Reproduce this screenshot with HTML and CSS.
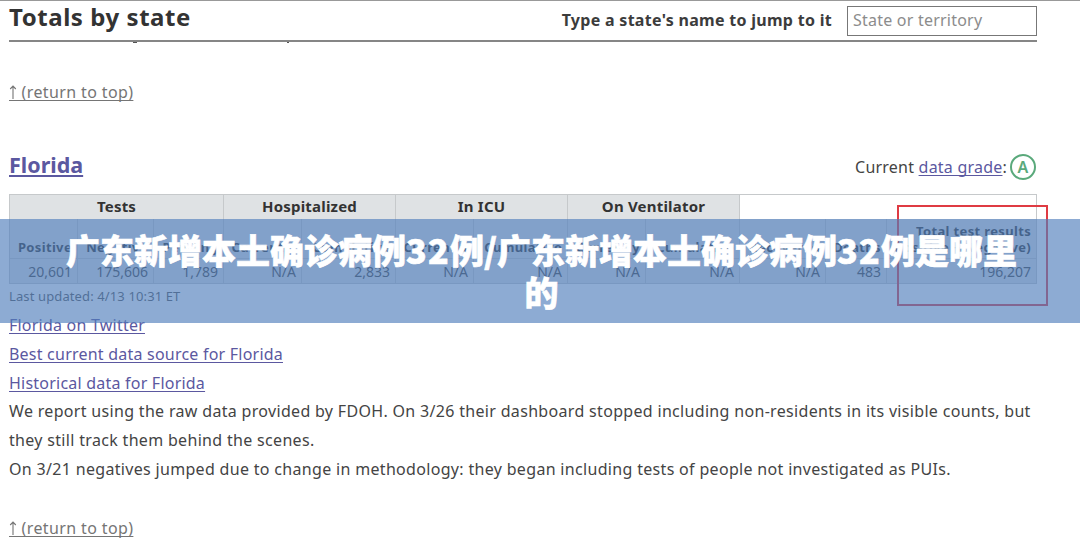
FILE: index.html
```html
<!DOCTYPE html>
<html lang="en">
<head>
    <meta charset="UTF-8">
    <meta name="viewport" content="width=device-width, initial-scale=1.0">
    <title>Totals by state</title>
    <link rel="stylesheet" href="styles.css">
</head>
<body>
    <div class="main">
        <header class="header">
            <h2>Totals by state</h2>
            <label for="state">Type a state's name to jump to it</label>
            <input type="text" id="state" placeholder="State or territory">
        </header>
        <div class="scrolled"><i></i><i></i></div>
        <a class="return" href="#"><svg class="arrow" viewBox="0 0 8 16"><path d="M4 14V1M1.2 4L4 1L6.8 4M0 15.5H8"/></svg> (return to top)</a>
        <div class="state_title">
            <h3><a href="#">Florida</a></h3>
            <p>Current <a href="#">data grade</a>:</p>
            <span class="grade">A</span>
        </div>
        <div class="table_wrap">
            <table>
                <colgroup>
                    <col class="w68"><col class="w76"><col class="w70">
                    <col class="w78"><col class="w94">
                    <col class="w78"><col class="w94">
                    <col class="w78"><col class="w94">
                    <col class="w86"><col class="w61"><col class="w150">
                </colgroup>
                <tr class="groups">
                    <th colspan="3">Tests</th>
                    <th colspan="2">Hospitalized</th>
                    <th colspan="2">In ICU</th>
                    <th colspan="2">On Ventilator</th>
                    <th colspan="3" class="empty"></th>
                </tr>
                <tr class="names">
                    <th>Positive</th>
                    <th>Negative</th>
                    <th>Pending</th>
                    <th>Currently</th>
                    <th>Cumulative</th>
                    <th>Currently</th>
                    <th>Cumulative</th>
                    <th>Currently</th>
                    <th>Cumulative</th>
                    <th>Recovered</th>
                    <th>Deaths</th>
                    <th>Total test results<br>(Positive + Negative)</th>
                </tr>
                <tr class="values">
                    <td>20,601</td>
                    <td>175,606</td>
                    <td>1,789</td>
                    <td>N/A</td>
                    <td>2,833</td>
                    <td>N/A</td>
                    <td>N/A</td>
                    <td>N/A</td>
                    <td>N/A</td>
                    <td>N/A</td>
                    <td>483</td>
                    <td>196,207</td>
                </tr>
            </table>
            <div class="mark"></div>
        </div>
        <p class="updated">Last updated: 4/13 10:31 ET</p>
        <div class="notes">
            <p><a href="#">Florida on Twitter</a></p>
            <p><a href="#">Best current data source for Florida</a></p>
            <p><a href="#">Historical data for Florida</a></p>
            <p>We report using the raw data provided by FDOH. On 3/26 their dashboard stopped including non-residents in its visible counts, but<br>they still track them behind the scenes.</p>
            <p>On 3/21 negatives jumped due to change in methodology: they began including tests of people not investigated as PUIs.</p>
        </div>
        <a class="return return_last" href="#"><svg class="arrow" viewBox="0 0 8 16"><path d="M4 14V1M1.2 4L4 1L6.8 4M0 15.5H8"/></svg> (return to top)</a>
    </div>
    <div class="banner" lang="zh">广东新增本土确诊病例<span>32</span>例/广东新增本土确诊病例<span>32</span>例是哪里<br>的</div>
</body>
</html>
```

FILE: styles.css
```css
*{
    margin: 0;
    padding: 0;
    box-sizing: border-box;
}
body {
    height: 542px;
    overflow: hidden;
    position: relative;
    background-color: #fff;
    border-top: 1px solid #999;
    font-family: "Noto Sans", "Open Sans", sans-serif;
    font-size: 16px;
    color: #444;
}
a {
    color: #5b58a0;
    letter-spacing: 0.22px;
    text-underline-offset: 2px;
    text-decoration-thickness: 1px;
    text-decoration-skip-ink: none;
}
.main {
    width: 1028px;
    margin-left: 9px;
}
.header {
    display: flex;
    align-items: center;
    height: 41px;
    border-bottom: 2px solid #868686;
}
.header h2 {
    flex: 1;
    font-size: 24px;
    line-height: 32px;
    letter-spacing: 0.55px;
    padding-bottom: 7px;
    color: #333;
}
.header label {
    font-weight: 700;
    letter-spacing: 0.29px;
    color: #3c3c3c;
    margin-right: 15px;
    padding-bottom: 2px;
}
.header input {
    width: 190px;
    height: 30px;
    padding: 0 5px 1px;
    border: 1px solid #777;
    outline: none;
    font: inherit;
    letter-spacing: 0.22px;
}
.header input::placeholder {
    color: #8c8c8c;
}
/* bottoms of the line that has scrolled under the header */
.scrolled {
    display: flex;
    gap: 150px;
    height: 1px;
    padding-left: 124px;
}
.scrolled i {
    width: 4px;
    background-color: #555;
}
.scrolled i + i {
    width: 2px;
}
.return {
    display: block;
    width: 124px;
    margin-top: 35px;
    line-height: 28px;
    letter-spacing: 0.38px;
    color: #757575;
    white-space: nowrap;
}
.arrow {
    width: 8px;
    height: 16px;
    vertical-align: -3px;
    fill: none;
    stroke: #757575;
    stroke-width: 1.1;
}
.state_title {
    display: flex;
    align-items: center;
    height: 32px;
    margin-top: 44px;
}
.state_title p {
    letter-spacing: 0.22px;
    padding-top: 1px;
}
.state_title h3 {
    flex: 1;
    font-size: 21.5px;
    padding-bottom: 4px;
}
.state_title h3 a {
    letter-spacing: 0;
    text-decoration-thickness: 2px;
}
.grade {
    width: 26px;
    height: 26px;
    margin: 1px 1px 0 3px;
    border: 2.5px solid #5aa97b;
    border-radius: 50%;
    color: #5aa97b;
    font-size: 16px;
    font-weight: 600;
    line-height: 22px;
    text-align: center;
}
.table_wrap {
    position: relative;
    margin-top: 12px;
}
table {
    width: 1027px;
    table-layout: fixed;
    border-collapse: collapse;
}
.w61 { width: 61px; }
.w68 { width: 68px; }
.w70 { width: 70px; }
.w76 { width: 76px; }
.w78 { width: 78px; }
.w86 { width: 86px; }
.w94 { width: 94px; }
.w150 { width: 150px; }
th, td {
    border: 1px solid #c6c9cb;
    background-color: #dfe2e4;
    text-align: right;
    white-space: nowrap;
    padding: 0 5px 0 0;
}
.groups th {
    height: 24px;
    padding: 0 0 2px;
    font-size: 15px;
    line-height: 20px;
    letter-spacing: 0.2px;
    text-align: center;
    border-bottom: none;
    color: #333;
}
.groups .empty {
    background-color: #fff;
}
.names th {
    height: 40px;
    font-size: 13px;
    line-height: 16px;
    letter-spacing: 0.35px;
    vertical-align: bottom;
    padding-bottom: 3px;
    border-top: none;
    color: #333;
}
.values td {
    height: 25px;
    padding-top: 1px;
    font-size: 14px;
    line-height: 20px;
    color: #444;
}
.mark {
    position: absolute;
    left: 888px;
    top: 11px;
    width: 151px;
    height: 101px;
    border: 2px solid #df3b43;
}
.updated {
    margin-top: 2px;
    font-size: 13px;
    line-height: 20px;
    letter-spacing: 0.12px;
    color: #555;
}
.notes {
    margin-top: 5px;
    line-height: 28.8px;
    letter-spacing: 0.32px;
    white-space: nowrap;
}
.return_last {
    margin-top: 30px;
}
.banner {
    position: absolute;
    left: 0;
    top: 218px;
    width: 1080px;
    height: 104px;
    padding: 10px 0 0 3px;
    background-color: rgba(80, 126, 188, 0.65);
    font-family: "Noto Sans CJK SC", sans-serif;
    font-size: 34px;
    font-weight: 900;
    line-height: 42px;
    text-align: center;
    white-space: nowrap;
    color: #fff;
    -webkit-text-stroke: 0.6px #fff;
}
.banner span {
    letter-spacing: 1.3px;
}
```
